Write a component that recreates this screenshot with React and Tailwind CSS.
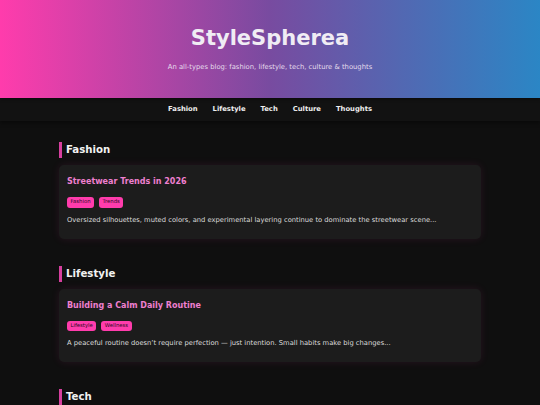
import React from "react";

const sections = [
  {
    name: "Fashion",
    title: "Streetwear Trends in 2026",
    tags: ["Fashion", "Trends"],
    excerpt:
      "Oversized silhouettes, muted colors, and experimental layering continue to dominate the streetwear scene...",
  },
  {
    name: "Lifestyle",
    title: "Building a Calm Daily Routine",
    tags: ["Lifestyle", "Wellness"],
    excerpt:
      "A peaceful routine doesn\u2019t require perfection \u2014 just intention. Small habits make big changes...",
  },
  {
    name: "Tech",
    title: "The Future of Wearable Tech",
    tags: ["Tech", "Gadgets"],
    excerpt: "From smart rings to AI glasses, wearables are quietly becoming part of everyday life...",
  },
];

export default function App() {
  return (
    <div
      className="min-h-[405px] bg-[#0f0f0f] text-[#e6e6e6]"
      style={{ fontFamily: '"DejaVu Sans", Verdana, sans-serif' }}
    >
      <header className="h-[98px] flex flex-col items-center bg-[linear-gradient(90deg,#ff3cac,#784ba0,#2b86c5)] shadow-[0_1px_3px_rgba(0,0,0,0.5)] relative z-10">
        <h1 className="mt-[25px] text-[21px] leading-[26px] font-bold text-[#f0ecf4]">StyleSpherea</h1>
        <p className="mt-[12px] text-[6.8px] leading-[8px] text-[#e4dcec]">
          An all-types blog: fashion, lifestyle, tech, culture &amp; thoughts
        </p>
      </header>
      <nav className="h-[23px] bg-[#121212] flex items-center justify-center gap-[15px] text-[6.8px] font-bold text-[#eeeeee] shadow-[0_2px_4px_rgba(0,0,0,0.4)]">
        <span>Fashion</span>
        <span>Lifestyle</span>
        <span>Tech</span>
        <span>Culture</span>
        <span>Thoughts</span>
      </nav>
      <main className="w-[422px] mx-auto pt-[21px] flex flex-col gap-[27px]">
        {sections.map((s) => (
          <section key={s.name} className="flex flex-col gap-[7px]">
            <h2 className="border-l-[3px] border-[#d63f9e] pl-[4px] text-[10.2px] leading-[16px] font-bold text-[#f2f2f2]">
              {s.name}
            </h2>
            <div className="bg-[#1c1c1c] rounded-[5px] shadow-[0_0_8px_rgba(255,60,172,0.10)] pl-[8px] pr-[8px] pt-[11px] pb-[14px]">
              <h3 className="text-[8px] leading-[12px] font-bold text-[#ee7fcf]">{s.title}</h3>
              <div className="mt-[9px] flex gap-[5px]">
                {s.tags.map((t) => (
                  <span
                    key={t}
                    className="h-[10.5px] px-[3.5px] flex items-center rounded-[3px] bg-[#ff3cac] text-[5.3px] text-[#2a0a1c]"
                  >
                    {t}
                  </span>
                ))}
              </div>
              <p className="mt-[7px] text-[6.75px] leading-[10px] text-[#dcdcdc]">{s.excerpt}</p>
            </div>
          </section>
        ))}
      </main>
    </div>
  );
}
